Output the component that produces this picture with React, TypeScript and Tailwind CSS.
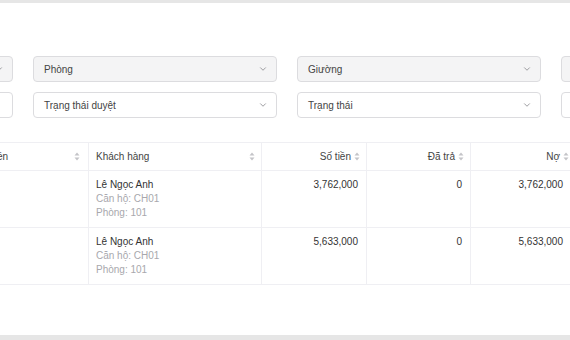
import { ChevronDown } from "lucide-react";

const rows = [
  { name: "Lê Ngọc Anh", apt: "CH01", room: "101", amount: "3,762,000", paid: "0", debt: "3,762,000" },
  { name: "Lê Ngọc Anh", apt: "CH01", room: "101", amount: "5,633,000", paid: "0", debt: "5,633,000" },
];

function SortIcon() {
  return (
    <svg width="6" height="9" viewBox="0 0 6 9" className="shrink-0">
      <path d="M3 0.5L5.5 3.5H0.5Z" fill="#c4c4c8" />
      <path d="M3 8.5L5.5 5.5H0.5Z" fill="#c4c4c8" />
    </svg>
  );
}

function Select({ label, disabled, arrow = true }: { label: string; disabled?: boolean; arrow?: boolean }) {
  return (
    <div
      className={`w-[244px] h-[26px] shrink-0 rounded-[4px] border border-[#dcdcdf] flex items-center pl-[10px] pr-[8px] ${
        disabled ? "bg-[#f4f4f5]" : "bg-white"
      }`}
    >
      <span className="flex-1 text-[10px] text-[#444]">{label}</span>
      {arrow && <ChevronDown size={10} strokeWidth={2} className="text-[#8a8a8f]" />}
    </div>
  );
}

export default function App() {
  return (
    <div className="w-[570px] h-[340px] overflow-hidden bg-white flex flex-col font-['Liberation_Sans',Arial,sans-serif]">
      <div className="h-[3px] bg-[#e6e6e6] shrink-0" />
      <div className="flex-1 pt-[53px]">
        <div className="flex flex-col gap-[10px]">
          <div className="flex gap-[20px] ml-[-231px]">
            <Select label="" disabled />
            <Select label="Phòng" disabled />
            <Select label="Giường" disabled />
            <Select label="" disabled arrow={false} />
          </div>
          <div className="flex gap-[20px] ml-[-231px]">
            <Select label="" arrow={false} />
            <Select label="Trạng thái duyệt" />
            <Select label="Trạng thái" />
            <Select label="" arrow={false} />
          </div>
        </div>

        <div className="mt-[24px] text-[10px]">
          <div className="flex h-[29px] border-y border-[#efeff3] ml-[-31px] text-[#444]">
            <div className="w-[120px] shrink-0 flex items-center justify-between px-[8px] border-r border-[#efeff3]">
              <span>Số tiền</span>
              <SortIcon />
            </div>
            <div className="w-[173px] shrink-0 flex items-center justify-between pl-[7px] pr-[6px] border-r border-[#efeff3]">
              <span>Khách hàng</span>
              <SortIcon />
            </div>
            <div className="w-[105px] shrink-0 flex items-center justify-end gap-[3px] pr-[6px] border-r border-[#efeff3]">
              <span>Số tiền</span>
              <SortIcon />
            </div>
            <div className="w-[104px] shrink-0 flex items-center justify-end gap-[3px] pr-[6px] border-r border-[#efeff3]">
              <span>Đã trả</span>
              <SortIcon />
            </div>
            <div className="w-[104px] shrink-0 flex items-center justify-end gap-[3px] pr-[6px]">
              <span>Nợ</span>
              <SortIcon />
            </div>
          </div>
          {rows.map((r, i) => (
            <div key={i} className="flex border-b border-[#efeff3] ml-[-31px] leading-[14px] text-[#333]">
              <div className="w-[120px] shrink-0 border-r border-[#efeff3]" />
              <div className="w-[173px] shrink-0 py-[7px] px-[7px] border-r border-[#efeff3]">
                <div>{r.name}</div>
                <div className="text-[#a8a8ad]">Căn hộ: {r.apt}</div>
                <div className="text-[#a8a8ad]">Phòng: {r.room}</div>
              </div>
              <div className="w-[105px] shrink-0 py-[7px] pr-[8px] text-right border-r border-[#efeff3]">{r.amount}</div>
              <div className="w-[104px] shrink-0 py-[7px] pr-[8px] text-right border-r border-[#efeff3]">{r.paid}</div>
              <div className="w-[104px] shrink-0 py-[7px] pr-[12px] text-right">{r.debt}</div>
            </div>
          ))}
        </div>
      </div>
      <div className="h-[5px] bg-[#e6e6e6] shrink-0" />
    </div>
  );
}
